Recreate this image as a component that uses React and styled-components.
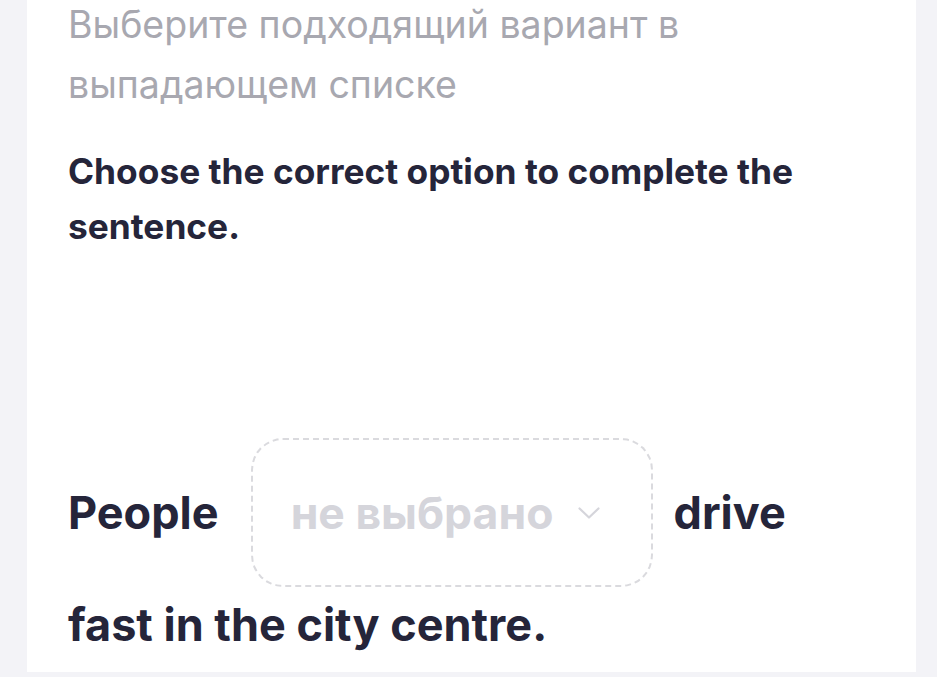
import React from 'react';
import styled, { createGlobalStyle } from 'styled-components';

const GlobalStyle = createGlobalStyle`
  body {
    margin: 0;
    background: #f3f3f7;
    font-family: Inter, "Noto Sans", sans-serif;
    overflow: hidden;
  }
`;

const Page = styled.div`
  min-height: 677px;
  padding: 0 21px 0 27px;
`;

const Card = styled.div`
  background: #ffffff;
  min-height: 677px;
  padding: 0 41px;
  box-sizing: border-box;
`;

const Hint = styled.p`
  margin: -5px 0 0;
  font-size: 37.5px;
  line-height: 60px;
  font-weight: 400;
  color: #a8a8b0;
`;

const Question = styled.h2`
  margin: 29px 0 0;
  font-size: 35.3px;
  line-height: 55px;
  font-weight: 700;
  color: #25253a;
`;

const Sentence = styled.div`
  display: flex;
  flex-wrap: wrap;
  align-items: center;
  row-gap: 13px;
  margin-top: 184px;
`;

const Word = styled.span`
  font-size: 45px;
  line-height: 50px;
  font-weight: 700;
  color: #25253a;
  margin-right: ${p => p.$gap || 0}px;
`;

const Select = styled.button`
  display: flex;
  align-items: center;
  justify-content: center;
  gap: 25px;
  width: 402px;
  height: 149px;
  margin-right: 21px;
  border: 2px dashed #dadade;
  border-radius: 32px;
  background: transparent;
  font-family: inherit;
  font-size: 44.5px;
  font-weight: 700;
  color: #d5d5db;
  cursor: pointer;
  padding: 0 12px 0 0;
`;

const Chevron = () => (
  <svg width="22" height="12" viewBox="0 0 22 12" fill="none">
    <path d="M1.5 1.5l9.5 9 9.5-9" stroke="#d5d5db" strokeWidth="2.2" strokeLinecap="round" strokeLinejoin="round" />
  </svg>
);

export default function App() {
  return (
    <>
      <GlobalStyle />
      <Page>
        <Card>
          <Hint>Выберите подходящий вариант в выпадающем списке</Hint>
          <Question>Choose the correct option to complete the sentence.</Question>
          <Sentence>
            <Word $gap={32}>People</Word>
            <Select>
              не выбрано
              <Chevron />
            </Select>
            <Word>drive</Word>
            <Word>fast in the city centre.</Word>
          </Sentence>
        </Card>
      </Page>
    </>
  );
}
